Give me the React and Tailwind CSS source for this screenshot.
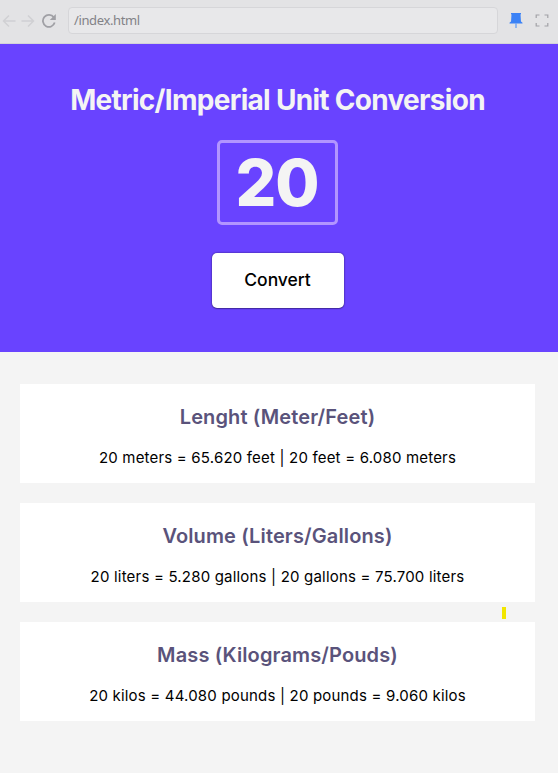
const CARDS = [
  { title: "Lenght (Meter/Feet)", text: "20 meters = 65.620 feet | 20 feet = 6.080 meters" },
  { title: "Volume (Liters/Gallons)", text: "20 liters = 5.280 gallons | 20 gallons = 75.700 liters" },
  { title: "Mass (Kilograms/Pouds)", text: "20 kilos = 44.080 pounds | 20 pounds = 9.060 kilos" },
];

function BrowserBar() {
  return (
    <div className="flex h-11 items-center border-b border-[#d3d3d9] bg-[#e3e3e5] pb-0.5">
      <svg className="ml-0.5 h-[14px] w-[14px] shrink-0" viewBox="0 0 14 14" fill="none" stroke="#d0d0d3" strokeWidth="1.5">
        <path d="M13.5 7H1.5M7 1.5L1.5 7L7 12.5" />
      </svg>
      <svg className="ml-[5px] h-[14px] w-[14px] shrink-0" viewBox="0 0 14 14" fill="none" stroke="#d0d0d3" strokeWidth="1.5">
        <path d="M.5 7H12.5M7 1.5L12.5 7L7 12.5" />
      </svg>
      <svg className="ml-[7px] h-[14px] w-[14px] shrink-0" viewBox="0 0 14 14" fill="none">
        <path d="M11.8 3.4A6 6 0 1 0 12.7 8.6" stroke="#a0a0a5" strokeWidth="1.8" />
        <path d="M13.8 0V6H7.8Z" fill="#a0a0a5" />
      </svg>
      <div className="ml-3 flex h-[27px] w-[430px] shrink-0 items-center rounded-[4px] border border-[#d6d6d9] bg-[#e8e8ea] pl-[5px] font-['Noto_Sans',sans-serif] text-[13px] tracking-[-0.38px] text-[#828287]">
        /index.html
      </div>
      <svg className="ml-[11px] h-[15px] w-[14px] shrink-0" viewBox="0 0 14 15">
        <path d="M2 0H12V1.2H11.5L12 9H2L2.5 1.2H2Z" fill="#3b82f6" />
        <path d="M.5 10.5V9.7L2 8.5H12L13.5 9.7V10.5Z" fill="#3b82f6" />
        <path d="M7 10V15" stroke="#75a7f4" strokeWidth="1.5" />
      </svg>
      <svg className="ml-3 h-[13px] w-[14px] shrink-0" viewBox="0 0 14 13" fill="none" stroke="#a2a2a7" strokeWidth="1.2">
        <path d="M1.2 4V1H4.5M9.5 1H12.8V4M12.8 9V12H9.5M4.5 12H1.2V9" />
      </svg>
    </div>
  );
}

export default function App() {
  return (
    <div className="flex h-[773px] w-[558px] flex-col overflow-hidden bg-[#f4f4f4] font-['Inter',sans-serif]">
      <BrowserBar />
      <header className="flex h-[308px] shrink-0 flex-col items-center bg-[#6943ff] pt-[39px] pr-[3px]">
        <h1 className="text-[28px] leading-[34px] font-bold tracking-[-0.7px] whitespace-nowrap text-[#f4f4f4]">
          Metric/Imperial Unit Conversion
        </h1>
        <div className="mt-[23px] flex h-[85px] w-[121px] items-center justify-center rounded-[5px] border-[3px] border-[#b295ff] pt-px pr-px text-[64px] leading-none font-extrabold tracking-[-1px] text-[#f4f4f4]">
          20
        </div>
        <button className="mt-7 ml-px h-[55px] w-[132px] rounded-[5px] bg-white pr-[7px] pl-[6px] pb-px text-[17.5px] font-medium tracking-[-0.05px] text-black shadow-[0_0_2px_rgba(0,0,0,0.6),0_1px_1px_rgba(0,0,0,0.25)]">
          Convert
        </button>
      </header>
      <main className="flex flex-col gap-5 pt-8 pr-[23px] pl-5">
        {CARDS.map((card) => (
          <section key={card.title} className="relative h-[99px] bg-white pt-5 text-center">
            <h2 className="text-[20px] leading-[26px] font-semibold tracking-[0.13px] text-[#5a537b]">{card.title}</h2>
            <p className="mt-[18px] text-[15px] leading-5 tracking-[0.19px] text-black">{card.text}</p>
            {card.title.startsWith("Volume") && (
              <span className="absolute right-[29px] -bottom-[17px] h-3 w-1 bg-[#f2e600]" />
            )}
          </section>
        ))}
      </main>
    </div>
  );
}
